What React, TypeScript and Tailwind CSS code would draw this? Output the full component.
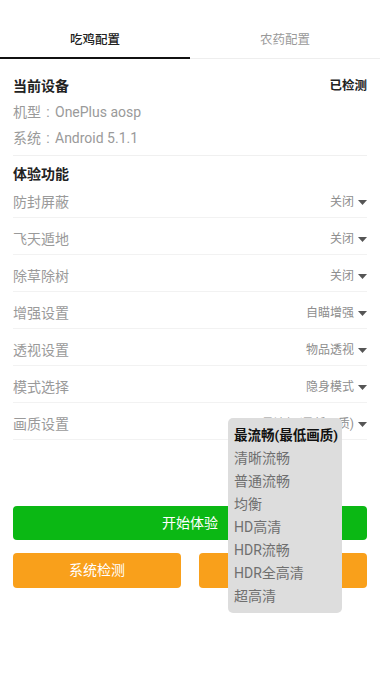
import { useState } from 'react'

const rows = [
  { label: '防封屏蔽', value: '关闭' },
  { label: '飞天遁地', value: '关闭' },
  { label: '除草除树', value: '关闭' },
  { label: '增强设置', value: '自瞄增强' },
  { label: '透视设置', value: '物品透视' },
  { label: '模式选择', value: '隐身模式' },
  { label: '画质设置', value: '最流畅(最低画质)' },
]

const qualities = ['最流畅(最低画质)', '清晰流畅', '普通流畅', '均衡', 'HD高清', 'HDR流畅', 'HDR全高清', '超高清']

function Caret() {
  return (
    <svg width="9" height="5" viewBox="0 0 9 5" className="ml-[4px] shrink-0">
      <path d="M0 0h9L4.5 5z" fill="#555555" />
    </svg>
  )
}

// centred full-width colon, like the Android system font draws it
function Colon() {
  return <span className="inline-block w-[14px] text-center">:</span>
}

export default function App() {
  const [tab, setTab] = useState(0)
  const [quality, setQuality] = useState(0)

  return (
    <div
      className="relative min-h-[675px] bg-white pt-5"
      style={{ fontFamily: 'Roboto, "Noto Sans CJK SC", sans-serif' }}
    >
      <div className="flex h-[39px]">
        {['吃鸡配置', '农药配置'].map((t, i) => (
          <button
            key={t}
            onClick={() => setTab(i)}
            className={
              tab === i
                ? 'flex flex-1 items-center justify-center border-b-2 border-[#111111] pt-[3px] text-[12.5px] font-medium text-[#222222]'
                : 'flex flex-1 items-center justify-center border-b border-[#eeeeee] pt-[3px] text-[12.5px] text-[#999999]'
            }
          >
            {t}
          </button>
        ))}
      </div>

      <div className="px-[13px]">
        <div className="border-b border-[#f0f0f0] pt-[14px] pb-[4px] leading-[26px]">
          <div className="flex items-center justify-between">
            <span className="text-[14px] font-bold text-[#222222]">当前设备</span>
            <span className="text-[12.5px] font-bold text-[#222222]">已检测</span>
          </div>
          <div className="h-[26px] text-[14px] text-[#9a9a9a]">机型<Colon />OnePlus aosp</div>
          <div className="h-[26px] text-[14px] text-[#9a9a9a]">系统<Colon />Android 5.1.1</div>
        </div>

        <div className="h-[25px] pt-[9px] text-[14px] leading-[18px] font-bold text-[#222222]">体验功能</div>

        {rows.map((r, i) => (
          <div
            key={r.label}
            className="flex items-center justify-between border-b border-[#f2f2f2] pt-[12px] pb-[6px] leading-[18px]"
          >
            <span className="text-[14px] text-[#9a9a9a]">{r.label}</span>
            <span className="flex items-center text-[12px] text-[#8e8e8e]">
              {i === 6 ? qualities[quality] : r.value}
              <Caret />
            </span>
          </div>
        ))}

        <button className="mt-[66px] flex h-[34px] w-full items-center justify-center rounded-[4px] bg-[#0bb814] text-[14px] text-white">
          开始体验
        </button>
        <div className="mt-[13px] flex gap-[18px]">
          <button className="flex h-[35px] flex-1 items-center justify-center rounded-[4px] bg-[#f9a01b] text-[14px] text-white">
            系统检测
          </button>
          <button className="flex h-[35px] flex-1 items-center justify-center rounded-[4px] bg-[#f9a01b] text-[14px] text-white">
            一键修复
          </button>
        </div>
      </div>

      <div className="absolute top-[418px] left-[228px] w-[114px] rounded-[5px] bg-[#dddddd] pt-[6px] pb-[5px] pl-[6px]">
        {qualities.map((q, i) => (
          <div
            key={q}
            onClick={() => setQuality(i)}
            className={
              quality === i
                ? 'text-[13.5px] leading-[23px] font-bold text-[#111111]'
                : 'text-[14px] leading-[23px] text-[#6f6f6f]'
            }
          >
            {q}
          </div>
        ))}
      </div>
    </div>
  )
}
